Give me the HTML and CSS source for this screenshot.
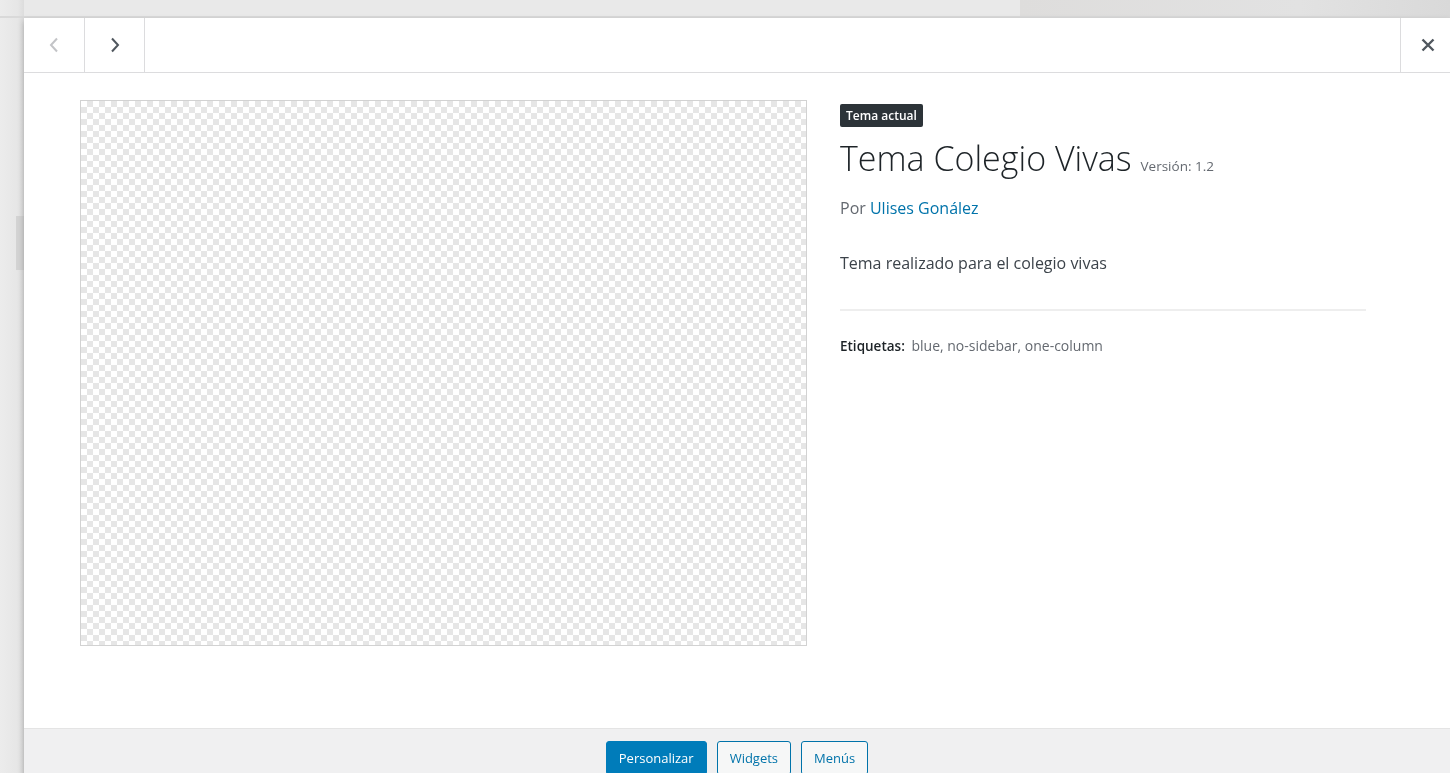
FILE: index.html
```html
<!DOCTYPE html>
<html lang="es">
<head>
<meta charset="utf-8">
<title>Detalles del tema</title>
<link rel="stylesheet" href="styles.css">
</head>
<body>
<div class="page-behind"></div>
<div class="theme-overlay">
  <div class="theme-header">
    <button class="nav-btn prev" aria-label="Anterior">
      <svg width="10" height="16" viewBox="0 0 10 16"><path d="M8 1.5 L2 8 L8 14.5" fill="none" stroke="currentColor" stroke-width="2"/></svg>
    </button>
    <button class="nav-btn next" aria-label="Siguiente">
      <svg width="10" height="16" viewBox="0 0 10 16"><path d="M2 1.5 L8 8 L2 14.5" fill="none" stroke="currentColor" stroke-width="2"/></svg>
    </button>
    <div class="header-spacer"></div>
    <button class="close-btn" aria-label="Cerrar">
      <svg width="14" height="14" viewBox="0 0 14 14"><path d="M1.5 1.5 L12.5 12.5 M12.5 1.5 L1.5 12.5" fill="none" stroke="currentColor" stroke-width="2.4"/></svg>
    </button>
  </div>
  <div class="theme-about">
    <div class="screenshot"></div>
    <div class="theme-info">
      <span class="current-label">Tema actual</span>
      <h2 class="theme-name">Tema Colegio Vivas <span class="theme-version">Versión: 1.2</span></h2>
      <p class="theme-author">Por <a href="#">Ulises Gonález</a></p>
      <p class="theme-description">Tema realizado para el colegio vivas</p>
      <p class="theme-tags"><span class="tags-label">Etiquetas:</span> blue, no-sidebar, one-column</p>
    </div>
  </div>
  <div class="theme-actions">
    <a class="button primary" href="#">Personalizar</a>
    <a class="button" href="#">Widgets</a>
    <a class="button" href="#">Menús</a>
  </div>
</div>
</body>
</html>
```

FILE: styles.css
```css
html, body {
  margin: 0;
  height: 100%;
  overflow: hidden;
}

body {
  font-family: "Open Sans", "Noto Sans", sans-serif;
  background-color: #e9e9e9;
  background-image:
    linear-gradient(to bottom, transparent 16px, #d9d9d9 16px, #d9d9d9 18px, transparent 18px),
    linear-gradient(to right, #ececec 0, #e6e6e6 18px, #dcdcdc 24px, transparent 24px),
    linear-gradient(to right, transparent 1020px, #dedddc 1020px, #e2e2e2 1300px, #d9d9d9 1450px);
  background-size: 100% 18px, 24px 100%, 100% 17px;
  background-repeat: no-repeat;
}

.page-behind {
  position: absolute;
  left: 16px;
  top: 216px;
  width: 8px;
  height: 54px;
  background: #d3d3d3;
}

.theme-overlay {
  position: fixed;
  top: 18px;
  left: 24px;
  right: 0;
  bottom: -60px;
  background: #fff;
  box-shadow: 0 3px 6px rgba(0, 0, 0, 0.25);
  display: flex;
  flex-direction: column;
}

.theme-header {
  display: flex;
  height: 54px;
  border-bottom: 1px solid #dcdcde;
  flex-shrink: 0;
}

.nav-btn,
.close-btn {
  border: 0;
  background: transparent;
  padding: 0;
  margin: 0;
  display: flex;
  align-items: center;
  justify-content: center;
  cursor: pointer;
}

.nav-btn {
  width: 61px;
  border-right: 1px solid #dcdcde;
}

.nav-btn.next {
  width: 60px;
}

.nav-btn.prev {
  color: #c3c4c7;
}

.nav-btn.next {
  color: #50575e;
}

.header-spacer {
  flex: 1;
}

.close-btn {
  width: 50px;
  border-left: 1px solid #dcdcde;
  color: #50575e;
  padding-left: 4px;
}

.theme-about {
  flex: none;
  height: 655px;
  box-sizing: border-box;
  display: flex;
  align-items: flex-start;
  padding: 27px 0 0 56px;
  gap: 33px;
}

.screenshot {
  width: 725px;
  height: 544px;
  flex-shrink: 0;
  border: 1px solid #d2d2d2;
  background-color: #ffffff;
  background-image:
    linear-gradient(45deg, #e6e6e6 25%, transparent 25%, transparent 75%, #e6e6e6 75%),
    linear-gradient(45deg, #e6e6e6 25%, transparent 25%, transparent 75%, #e6e6e6 75%);
  background-size: 12px 12px;
  background-position: 0 0, 6px 6px;
}

.theme-info {
  width: 526px;
  padding-top: 3px;
}

.current-label {
  display: inline-block;
  background: #2c3338;
  color: #fff;
  font-size: 12px;
  font-weight: 600;
  line-height: 23px;
  padding: 0 6px;
  border-radius: 2px;
}

.theme-name {
  margin: 10px 0 0;
  font-size: 34px;
  font-weight: 300;
  line-height: 42px;
  color: #1d2327;
}

.theme-version {
  font-size: 13.5px;
  font-weight: 400;
  color: #646970;
  margin-left: 0;
}

.theme-author {
  margin: 10px 0 0;
  font-size: 16px;
  line-height: 22px;
  color: #646970;
}

.theme-author a {
  color: #0073aa;
  text-decoration: none;
}

.theme-description {
  margin: 33px 0 0;
  font-size: 16px;
  line-height: 22px;
  color: #3c434a;
  padding-bottom: 35px;
  border-bottom: 2px solid #eeeeee;
}

.theme-tags {
  margin: 25px 0 0;
  font-size: 14px;
  line-height: 20px;
  color: #646970;
}

.tags-label {
  font-weight: 600;
  color: #1d2327;
  font-size: 13.5px;
  margin-right: 3px;
}

.theme-actions {
  flex-shrink: 0;
  height: 80px;
  background: #f0f0f1;
  border-top: 1px solid #e4e4e4;
  display: flex;
  justify-content: center;
  align-items: flex-start;
  gap: 10px;
  padding-top: 12px;
  box-sizing: border-box;
}

.button {
  display: inline-block;
  font-size: 13px;
  line-height: 32px;
  padding: 0 12px;
  border: 1px solid #0073aa;
  border-radius: 3px;
  color: #0073aa;
  background: #f6f7f7;
  text-decoration: none;
}

.button.primary {
  background: #007cba;
  border-color: #007cba;
  color: #fff;
}
```
